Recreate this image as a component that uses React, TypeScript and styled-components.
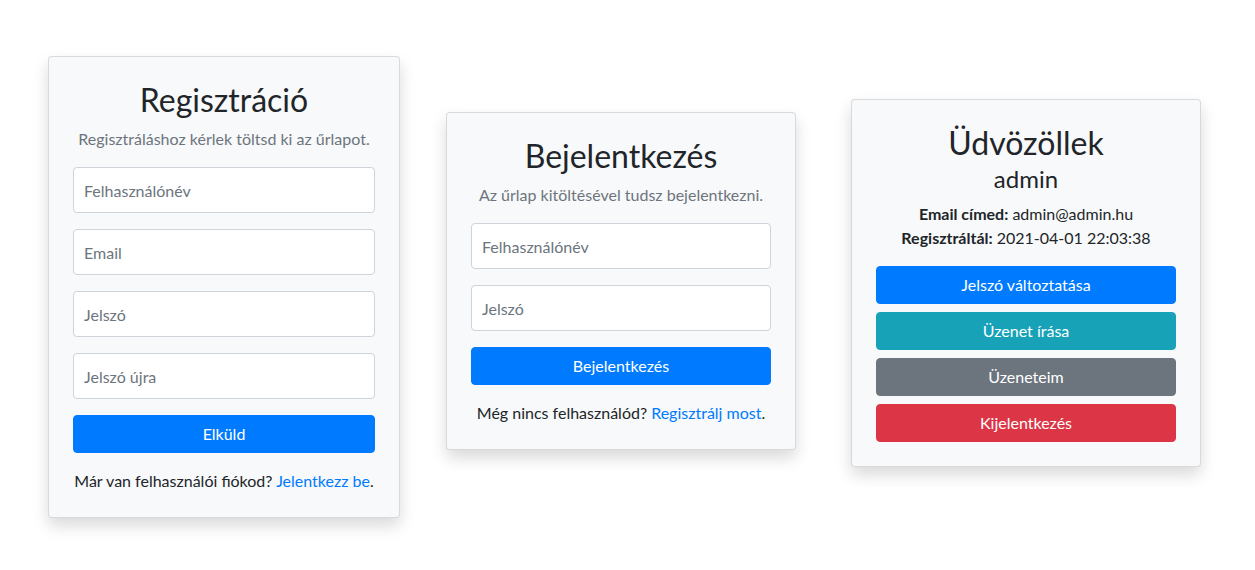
import React from "react";
import styled, { createGlobalStyle } from "styled-components";

const Global = createGlobalStyle`
  html, body { margin: 0; padding: 0; background: #fff; }
  body {
    font-family: Lato, "Noto Sans", sans-serif;
    font-size: 16px;
    line-height: 1.5;
    color: #212529;
  }
  * { box-sizing: border-box; }
`;

const Page = styled.main`
  display: flex;
  flex-direction: row;
  align-items: flex-start;
  height: 570px;
  width: 1255px;
`;

const Card = styled.section<{ $left: number; $top: number; $width: number }>`
  margin-left: ${(p) => p.$left}px;
  margin-top: ${(p) => p.$top}px;
  width: ${(p) => p.$width}px;
  padding: 24px;
  background: #f8f9fa;
  border: 1px solid rgba(0, 0, 0, 0.125);
  border-radius: 4px;
  box-shadow: 0 8px 16px rgba(0, 0, 0, 0.15);
  display: flex;
  flex-direction: column;
  text-align: center;
`;

const Title = styled.h2<{ $mb?: number }>`
  margin: 0 0 ${(p) => (p.$mb ?? 8)}px;
  font-size: 32px;
  font-weight: 400;
  line-height: 1.2;
`;

const SubTitle = styled.h4`
  margin: 0 0 8px;
  font-size: 24px;
  font-weight: 400;
  line-height: 1.2;
`;

const Lead = styled.p`
  margin: 0 0 16px;
  color: #6c757d;
`;

const Field = styled.input`
  display: block;
  width: 100%;
  height: 46px;
  margin: 0 0 16px;
  padding: 0 10px;
  font: inherit;
  color: #495057;
  background: #fff;
  border: 1px solid #ced4da;
  border-radius: 4px;
  &::placeholder { color: #6c757d; opacity: 1; }
`;

const Button = styled.button<{ $bg: string; $mb?: number }>`
  display: block;
  width: 100%;
  height: 38px;
  margin: 0 0 ${(p) => (p.$mb ?? 0)}px;
  padding: 0 12px;
  font: inherit;
  color: #fff;
  background: ${(p) => p.$bg};
  border: 1px solid ${(p) => p.$bg};
  border-radius: 4px;
  cursor: pointer;
`;

const Footer = styled.p`
  margin: 16px 0 0;
`;

const Link = styled.a`
  color: #007bff;
  text-decoration: none;
`;

const Info = styled.p`
  margin: 0 0 16px;
  line-height: 1.5;
`;

export default function App() {
  return (
    <>
      <Global />
      <Page>
        <Card $left={48} $top={56} $width={352}>
          <Title>Regisztráció</Title>
          <Lead>Regisztráláshoz kérlek töltsd ki az űrlapot.</Lead>
          <Field placeholder="Felhasználónév" />
          <Field placeholder="Email" />
          <Field placeholder="Jelszó" type="password" />
          <Field placeholder="Jelszó újra" type="password" />
          <Button $bg="#007bff">Elküld</Button>
          <Footer>
            Már van felhasználói fiókod? <Link href="#">Jelentkezz be</Link>.
          </Footer>
        </Card>
        <Card $left={46} $top={112} $width={350}>
          <Title>Bejelentkezés</Title>
          <Lead>Az űrlap kitöltésével tudsz bejelentkezni.</Lead>
          <Field placeholder="Felhasználónév" />
          <Field placeholder="Jelszó" type="password" />
          <Button $bg="#007bff">Bejelentkezés</Button>
          <Footer>
            Még nincs felhasználód? <Link href="#">Regisztrálj most</Link>.
          </Footer>
        </Card>
        <Card $left={55} $top={99} $width={350}>
          <Title $mb={3}>Üdvözöllek</Title>
          <SubTitle>admin</SubTitle>
          <Info>
            <b>Email címed:</b> admin@admin.hu
            <br />
            <b>Regisztráltál:</b> 2021-04-01 22:03:38
          </Info>
          <Button $bg="#007bff" $mb={8}>Jelszó változtatása</Button>
          <Button $bg="#17a2b8" $mb={8}>Üzenet írása</Button>
          <Button $bg="#6c757d" $mb={8}>Üzeneteim</Button>
          <Button $bg="#dc3545">Kijelentkezés</Button>
        </Card>
      </Page>
    </>
  );
}
